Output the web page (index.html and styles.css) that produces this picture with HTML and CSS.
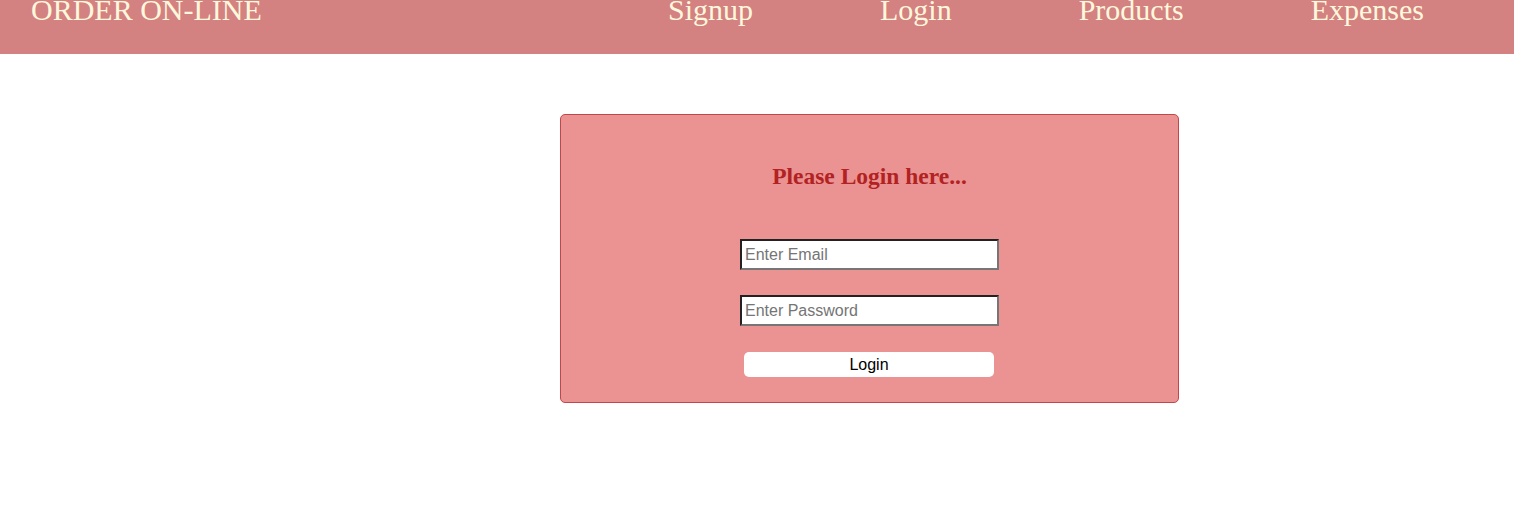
FILE: index.html
```html
<!DOCTYPE html>
<html>
<head>
<meta charset="utf-8">
<title>Order On-line</title>
<link rel="stylesheet" href="styles.css">
</head>
<body>
<header class="topbar">
  <div class="brand">ORDER ON-LINE</div>
  <nav class="nav">
    <a class="nav-link" href="#">Signup</a>
    <a class="nav-link" href="#">Login</a>
    <a class="nav-link" href="#">Products</a>
    <a class="nav-link" href="#">Expenses</a>
  </nav>
</header>
<main class="main">
  <form class="card">
    <h3 class="card-title">Please Login here...</h3>
    <input class="field" type="email" placeholder="Enter Email">
    <input class="field" type="password" placeholder="Enter Password">
    <button class="btn" type="button">Login</button>
  </form>
</main>
</body>
</html>
```
FILE: styles.css
```css
* { box-sizing: border-box; }
body {
  margin: 0;
  background: #ffffff;
  font-family: "Liberation Serif", "Times New Roman", serif;
}
.topbar {
  height: 54px;
  background: #d48181;
  display: flex;
  justify-content: space-between;
  align-items: flex-start;
  padding: 0 90px 0 31px;
  overflow: hidden;
}
.brand, .nav-link {
  font-size: 30px;
  line-height: 30px;
  margin-top: -5px;
  color: #fff8dc;
  text-decoration: none;
  white-space: nowrap;
}
.nav {
  display: flex;
  gap: 127px;
}
.main {
  padding: 60px 0 0 560px;
}
.card {
  width: 619px;
  height: 289px;
  background: #eb9292;
  border: 1px solid #c2474a;
  border-radius: 5px;
  display: flex;
  flex-direction: column;
  align-items: center;
  padding: 48px 0 25px;
}
.card-title {
  margin: 0 0 49px;
  font-size: 23.5px;
  line-height: 27px;
  font-weight: bold;
  color: #b22222;
}
.field {
  width: 259px;
  height: 31px;
  margin: 0 0 25px;
  padding: 1px 3px;
  border-width: 2px;
  border-style: solid;
  border-color: #222222 #767676 #767676 #222222;
  background: #ffffff;
  font-family: "Liberation Sans", Arial, sans-serif;
  font-size: 16px;
  color: #000;
  outline: none;
}
.field::placeholder { color: #757575; }
.btn {
  width: 250px;
  height: 25px;
  margin: 1px 1px 0 0;
  border: none;
  border-radius: 5px;
  background: #ffffff;
  font-family: "Liberation Sans", Arial, sans-serif;
  font-size: 16px;
  color: #000;
  padding: 0;
}
```
